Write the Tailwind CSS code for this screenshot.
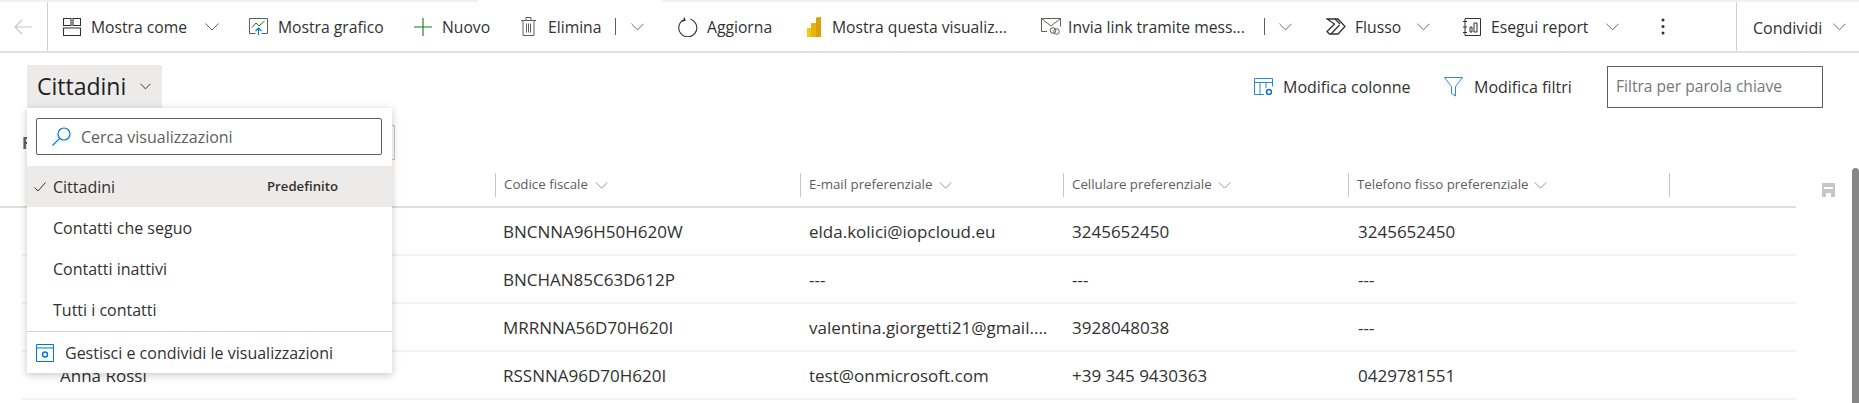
<!DOCTYPE html>
<html lang="it">
<head>
<meta charset="UTF-8">
<title>Cittadini</title>
<script src="https://cdn.jsdelivr.net/npm/@tailwindcss/browser@4"></script>
</head>
<body class="bg-white">
<div class="relative w-[1859px] h-[403px] overflow-hidden bg-white text-[#323130] font-['Open_Sans',sans-serif] text-[16px] whitespace-nowrap">

  <!-- striscia superiore -->
  <div class="flex h-[2px]">
    <div class="w-[478px] bg-[#f0f0f0]"></div>
    <div class="w-[184px]"></div>
    <div class="flex-1 bg-[#f0f0f0]"></div>
  </div>

  <!-- barra comandi -->
  <div class="flex items-center h-[51px] border-b-2 border-[#e1e1e1] text-[15.7px] [&>span]:pt-[2px]">
    <div class="flex items-center w-[48px] h-full border-r border-[#d2d0ce] pl-[14px]">
      <svg class="w-[18px] h-[16px]" viewBox="0 0 18 16" fill="none" stroke="#c8c6c4" stroke-width="1.1"><path d="M18 8H1M8 1 1 8l7 7"/></svg>
    </div>

    <svg class="ml-[15px] w-[18px] h-[18px]" viewBox="0 0 18 18" fill="none" stroke="#323130" stroke-width="1.1"><path d="M.5.5h7.5v7H.5zM10 .5h7.5v7H10zM.5 10h17v7.5H.5z"/></svg>
    <span class="ml-[10px] w-[97px]">Mostra come</span>
    <svg class="ml-[17px] w-[14px] h-[8px]" viewBox="0 0 14 8" fill="none" stroke="#605e5c"><path d="m.5.5 6.500 6.500L13.500.5"/></svg>

    <svg class="ml-[30px] w-[19px] h-[17px]" viewBox="0 0 19 17" fill="none"><path d="M6.500 15.500H.5V.5h18v15h-6" stroke="#605e5c"/><path d="m3 9.500 4-4.500 3 3 5.500-5" stroke="#107c10"/><path d="M9.500 17v-6.500M6.500 13l3-3 3 3" stroke="#0078d4" stroke-width="1.2"/></svg>
    <span class="ml-[10px] w-[106px]">Mostra grafico</span>

    <svg class="ml-[30px] w-[18px] h-[18px]" viewBox="0 0 18 18" fill="none" stroke="#107c10" stroke-width="1.1"><path d="M9 0v18M0 9h18"/></svg>
    <span class="ml-[10px] w-[49px]">Nuovo</span>

    <svg class="ml-[30px] w-[15px] h-[19px]" viewBox="0 0 15 19" fill="none" stroke="#605e5c"><path d="M0 3.500h15M5 3.500v-3h5v3M2 3.500v15h11v-15M5.500 6.500v9M7.500 6.500v9M9.500 6.500v9"/></svg>
    <span class="ml-[12px] w-[52px]">Elimina</span>
    <div class="ml-[15px] w-px h-[17px] bg-[#605e5c]"></div>
    <svg class="ml-[15px] w-[13px] h-[8px]" viewBox="0 0 14 8" fill="none" stroke="#605e5c"><path d="m.5.5 6.500 6.500L13.500.5"/></svg>

    <svg class="ml-[34px] w-[20px] h-[20px]" viewBox="0 0 20 20" fill="none" stroke="#323130" stroke-width="1.100"><path d="M12.500 2.200a9 9 0 1 1-6 .2M6 .5l1 2.800-3 .9"/></svg>
    <span class="ml-[9px] w-[68px]">Aggiorna</span>

    <svg class="ml-[32px] w-[14px] h-[20px]" viewBox="0 0 14 20"><rect x="0" y="11" width="5" height="9" fill="#f2c811"/><rect x="4" y="6" width="5" height="14" fill="#e8b30f"/><path d="M9 .5 14 0v20H9z" fill="#d9a20a"/></svg>
    <span class="ml-[11px] w-[176px]">Mostra questa visualiz...</span>

    <svg class="ml-[33px] w-[20px] h-[17px]" viewBox="0 0 20 17" fill="none" stroke="#605e5c"><path d="M6 13.500H.5V.5h19v8M.5.5 10 8l9.500-7.500"/><circle cx="12" cy="12.500" r="2.800"/><circle cx="15.500" cy="13.500" r="2.800"/></svg>
    <span class="ml-[7px] w-[178px]">Invia link tramite mess...</span>
    <div class="ml-[18px] w-px h-[17px] bg-[#605e5c]"></div>
    <svg class="ml-[14px] w-[13px] h-[8px]" viewBox="0 0 14 8" fill="none" stroke="#605e5c"><path d="m.5.5 6.500 6.500L13.500.5"/></svg>

    <svg class="ml-[34px] w-[20px] h-[17px]" viewBox="0 0 20 17" fill="none" stroke="#323130" stroke-width="1.300"><path d="M1 1h11l7 7.500-7 7.500H3.500L1 13.500 8.500 6z"/><path d="M5 16l8.500-9M9 1l5 5"/></svg>
    <span class="ml-[9px] w-[45px]">Flusso</span>
    <svg class="ml-[17px] w-[13px] h-[8px]" viewBox="0 0 14 8" fill="none" stroke="#605e5c"><path d="m.5.5 6.500 6.500L13.500.5"/></svg>

    <svg class="ml-[33px] w-[18px] h-[18px]" viewBox="0 0 18 18" fill="none" stroke="#323130"><path d="M2 .5h15.500v17H2M2 .5V17.500M0 3.500h4M0 9h4M0 14.500h4M7 14V9h2v5zM11 14V5h3v9z"/></svg>
    <span class="ml-[10px] w-[97px]">Esegui report</span>
    <svg class="ml-[18px] w-[13px] h-[8px]" viewBox="0 0 14 8" fill="none" stroke="#605e5c"><path d="m.5.5 6.500 6.500L13.500.5"/></svg>

    <svg class="ml-[42px] w-[4px] h-[17px]" viewBox="0 0 4 17" fill="#323130"><circle cx="2" cy="2" r="1.500"/><circle cx="2" cy="8.500" r="1.500"/><circle cx="2" cy="15" r="1.500"/></svg>

    <div class="flex items-center ml-[71px] h-full border-l border-[#d2d0ce] pl-[16px] text-[16px] [&>span]:pt-[2px]">
      <span class="w-[69px]">Condividi</span>
      <svg class="ml-[11px] w-[13px] h-[8px]" viewBox="0 0 14 8" fill="none" stroke="#605e5c"><path d="m.5.5 6.500 6.500L13.500.5"/></svg>
    </div>
  </div>

  <!-- titolo vista e azioni -->
  <div class="flex items-start h-[72px] pt-[12px] pl-[27px]">
    <div class="flex items-center w-[135px] h-[43px] bg-[#edebe9] pl-[10px]">
      <span class="w-[91px] text-[23px] font-medium text-[#201f1e]">Cittadini</span>
      <svg class="ml-[12px] w-[11px] h-[7px]" viewBox="0 0 14 8" fill="none" stroke="#323130" stroke-width="1.200"><path d="m.5.5 6.500 6.500L13.500.5"/></svg>
    </div>
    <div class="flex items-center h-[43px] ml-[1092px]">
      <svg class="w-[19px] h-[18px]" viewBox="0 0 19 18" fill="none" stroke="#2b88d8"><path d="M.5.5h18v8M.5.5v16H10M.5 4.500h18M6 4.500v12M12 4.500V10"/><circle cx="15" cy="14" r="2.500" stroke="#106ebe" stroke-width="1.500"/></svg>
      <span class="ml-[10px] w-[128px]">Modifica colonne</span>
      <svg class="ml-[33px] w-[19px] h-[20px]" viewBox="0 0 19 20" fill="none" stroke="#2b88d8"><path d="M.5.5h18l-7 9v9.500l-4-2.500V9.500z"/></svg>
      <span class="ml-[11px] w-[97px]">Modifica filtri</span>
      <div class="flex items-center ml-[36px] w-[216px] h-[42px] border border-[#605e5c] pl-[8px] text-[15.6px] text-[#777]">Filtra per parola chiave</div>
    </div>
  </div>

  <!-- griglia -->
  <div class="flex h-[278px]">
    <div class="w-[1796px]">
      <div class="flex items-center h-[35px] pl-[22px]">
        <span class="font-bold text-[#605e5c]">Filtro</span>
        <div class="ml-[200px] w-[130px] h-[35px] border border-[#c8c6c4]"></div>
      </div>
      <div class="h-[48px] pt-[13px] pl-[495px] border-b-2 border-[#e1dfdd] grid grid-cols-[305px_263px_285px_321px_127px] text-[13.3px] text-[#605e5c]">
        <div class="flex items-center h-[24px] border-l border-[#c8c6c4] pl-[8px]">Codice fiscale<svg class="ml-[7px] w-[13px] h-[7px]" viewBox="0 0 14 8" fill="none" stroke="#8a8886"><path d="m.5.5 6.500 6.500L13.500.5"/></svg></div>
        <div class="flex items-center h-[24px] border-l border-[#c8c6c4] pl-[8px]">E-mail preferenziale<svg class="ml-[7px] w-[13px] h-[7px]" viewBox="0 0 14 8" fill="none" stroke="#8a8886"><path d="m.5.5 6.500 6.500L13.500.5"/></svg></div>
        <div class="flex items-center h-[24px] border-l border-[#c8c6c4] pl-[8px]">Cellulare preferenziale<svg class="ml-[6px] w-[13px] h-[7px]" viewBox="0 0 14 8" fill="none" stroke="#8a8886"><path d="m.5.5 6.500 6.500L13.500.5"/></svg></div>
        <div class="flex items-center h-[24px] border-l border-[#c8c6c4] pl-[8px]">Telefono fisso preferenziale<svg class="ml-[6px] w-[13px] h-[7px]" viewBox="0 0 14 8" fill="none" stroke="#8a8886"><path d="m.5.5 6.500 6.500L13.500.5"/></svg></div>
        <div class="h-[24px] border-l border-[#c8c6c4]"></div>
      </div>
      <div class="ml-[22px] grid grid-cols-[481px_306px_263px_286px_438px] h-[48px] pt-[2px] items-center border-b-2 border-[#f3f2f1] text-[17px]">
        <div></div><div>BNCNNA96H50H620W</div><div>elda.kolici@iopcloud.eu</div><div>3245652450</div><div>3245652450</div>
      </div>
      <div class="ml-[22px] grid grid-cols-[481px_306px_263px_286px_438px] h-[48px] pt-[2px] items-center border-b-2 border-[#f3f2f1] text-[17px]">
        <div></div><div>BNCHAN85C63D612P</div><div>---</div><div>---</div><div>---</div>
      </div>
      <div class="ml-[22px] grid grid-cols-[481px_306px_263px_286px_438px] h-[48px] pt-[2px] items-center border-b-2 border-[#f3f2f1] text-[17px]">
        <div></div><div>MRRNNA56D70H620I</div><div>valentina.giorgetti21@gmail....</div><div>3928048038</div><div>---</div>
      </div>
      <div class="ml-[22px] grid grid-cols-[481px_306px_263px_286px_438px] h-[48px] pt-[2px] items-center border-b-2 border-[#f3f2f1] text-[17px]">
        <div class="pl-[38px]">Anna Rossi</div><div>RSSNNA96D70H620I</div><div>test@onmicrosoft.com</div><div>+39 345 9430363</div><div>0429781551</div>
      </div>
    </div>
    <div class="w-[56px] pl-[26px] pt-[58px]">
      <svg class="w-[13px] h-[14px]" viewBox="0 0 13 14" fill="#c8c6c4"><path fill-rule="evenodd" d="M0 0h13v14H0zM2 4v2h9V4zM4 10v4h5v-4z"/></svg>
    </div>
    <div class="w-[7px] mt-[43px] bg-[#868686] rounded-t-[4px]"></div>
  </div>

  <!-- menu viste -->
  <div class="absolute left-[27px] top-[108px] w-[365px] h-[265px] bg-white shadow-[0_2px_8px_rgba(0,0,0,0.22)]">
    <div class="flex items-center mt-[10px] ml-[9px] w-[346px] h-[37px] border border-[#605e5c] rounded-[2px] pl-[15px] text-[#605e5c]">
      <svg class="w-[19px] h-[19px]" viewBox="0 0 19 19" fill="none" stroke="#0078d4" stroke-width="1.200"><circle cx="12" cy="7" r="6"/><path d="M7.700 11.300.5 18.500"/></svg>
      <span class="ml-[10px]">Cerca visualizzazioni</span>
    </div>
    <div class="flex items-center mt-[11px] h-[41px] bg-[#edebe9] pl-[7px]">
      <svg class="w-[12px] h-[10px]" viewBox="0 0 12 10" fill="none" stroke="#323130"><path d="m.5 5.500 3.500 3.500L11.500.5"/></svg>
      <span class="ml-[7px] w-[214px]">Cittadini</span>
      <span class="text-[13.2px] font-semibold text-[#323130]">Predefinito</span>
    </div>
    <div class="flex items-center h-[41px] pl-[26px] pt-[1px]">Contatti che seguo</div>
    <div class="flex items-center h-[41px] pl-[26px] pt-[1px]">Contatti inattivi</div>
    <div class="flex items-center h-[41px] pl-[26px] pt-[1px]">Tutti i contatti</div>
    <div class="flex items-center h-[42px] mt-[1px] border-t border-[#d2d0ce] pl-[9px]">
      <svg class="w-[18px] h-[18px]" viewBox="0 0 18 18" fill="none" stroke="#0078d4"><path d="M.5.5h17v17H.5zM.5 4h17"/><circle cx="9" cy="10.500" r="2.500" stroke-width="1.500"/></svg>
      <span class="ml-[11px]">Gestisci e condividi le visualizzazioni</span>
    </div>
  </div>
</div>
</body>
</html>
